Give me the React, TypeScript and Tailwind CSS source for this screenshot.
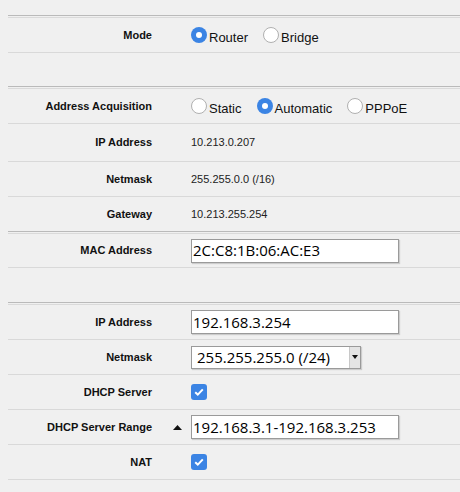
import React from 'react';

const sans = "font-['Liberation_Sans',Arial,sans-serif]";
const field = "font-['Open_Sans',sans-serif]";

function Section() {
  return <div className="h-[3px] border-t border-b border-t-[#bababa] border-b-[#dadada]" />;
}

function Radio({ checked, label }: { checked?: boolean; label: string }) {
  return (
    <span className="flex items-center mr-[15px]">
      {checked ? (
        <span className="w-4 h-4 rounded-full bg-[#3b84e4] flex items-center justify-center">
          <span className="w-[6px] h-[6px] rounded-full bg-white" />
        </span>
      ) : (
        <span className="w-4 h-4 rounded-full bg-white border border-[#b0b0b0]" />
      )}
      <span className="ml-[2px] mt-[6px] text-[13px] text-[#111]">{label}</span>
    </span>
  );
}

function Check() {
  return (
    <span className="w-4 h-4 rounded-[3px] bg-[#3b84e4] flex items-center justify-center">
      <svg width="10" height="8" viewBox="0 0 10 8">
        <path d="M1.2 4.2 L3.8 6.6 L8.8 1.4" stroke="white" strokeWidth="2" fill="none" />
      </svg>
    </span>
  );
}

function TextInput({ value }: { value: string }) {
  return (
    <div className={`w-[208px] h-[24px] bg-white border border-[#9a9a9a] shadow-[1px_1px_1px_rgba(0,0,0,0.15)] pl-[1px] flex items-center text-[15px] text-black ${field}`}>
      {value}
    </div>
  );
}

function Row({
  label,
  h,
  border = true,
  extra,
  children,
}: {
  label?: string;
  h: string;
  border?: boolean;
  extra?: React.ReactNode;
  children?: React.ReactNode;
}) {
  return (
    <div className={`flex items-center ${h} ${border ? 'border-b border-[#d9d9d9]' : ''}`}>
      <div className="w-[144px] text-right text-[11px] font-bold text-[#111]">{label}</div>
      <div className="w-[39px] flex justify-end pr-[9px]">{extra}</div>
      <div className="flex items-center text-[11px] text-[#222]">{children}</div>
    </div>
  );
}

export default function App() {
  return (
    <div className={`w-[460px] h-[492px] bg-[#f0f0f0] pl-2 pt-[15px] ${sans}`}>
      <Section />
      <Row label="Mode" h="h-[35px]">
        <Radio checked label="Router" />
        <Radio label="Bridge" />
      </Row>
      <div className="h-[33px]" />
      <Section />
      <Row label="Address Acquisition" h="h-[35px]">
        <Radio label="Static" />
        <Radio checked label="Automatic" />
        <Radio label="PPPoE" />
      </Row>
      <Row label="IP Address" h="h-[38px]">10.213.0.207</Row>
      <Row label="Netmask" h="h-[35px]">255.255.0.0 (/16)</Row>
      <Row label="Gateway" h="h-[34px]" border={false}>10.213.255.254</Row>
      <Section />
      <Row label="MAC Address" h="h-[34px]">
        <TextInput value="2C:C8:1B:06:AC:E3" />
      </Row>
      <div className="h-[34px]" />
      <Section />
      <Row label="IP Address" h="h-[35px]">
        <TextInput value="192.168.3.254" />
      </Row>
      <Row label="Netmask" h="h-[35px]">
        <div className={`w-[170px] h-[23px] bg-white border border-[#9a9a9a] shadow-[1px_1px_1px_rgba(0,0,0,0.15)] flex items-center text-[15px] text-black ${field}`}>
          <span className="flex-1 pl-[5px]">255.255.255.0 (/24)</span>
          <span className="w-[11px] h-full bg-[#e4e4e4] border-l border-[#c8c8c8] flex items-center justify-center">
            <svg width="6" height="4" viewBox="0 0 6 4">
              <path d="M0 0 L6 0 L3 4 Z" fill="#111" />
            </svg>
          </span>
        </div>
      </Row>
      <Row label="DHCP Server" h="h-[35px]">
        <Check />
      </Row>
      <Row
        label="DHCP Server Range"
        h="h-[35px]"
        extra={
          <svg width="9" height="5" viewBox="0 0 9 5">
            <path d="M0 5 L4.5 0 L9 5 Z" fill="#111" />
          </svg>
        }
      >
        <TextInput value="192.168.3.1-192.168.3.253" />
      </Row>
      <Row label="NAT" h="h-[35px]">
        <Check />
      </Row>
    </div>
  );
}
